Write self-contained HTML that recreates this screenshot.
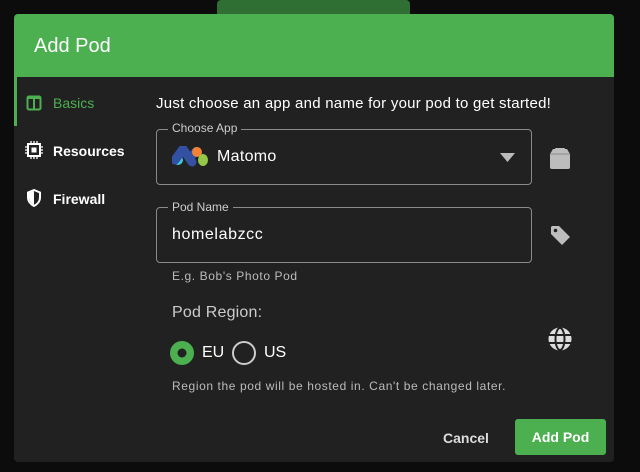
<!DOCTYPE html>
<html><head><style>
*{margin:0;padding:0;box-sizing:border-box}
body{width:640px;height:472px;background:#0c0c0c;font-family:"Liberation Sans",sans-serif;position:relative;overflow:hidden;color:#fff}
.abs{position:absolute}
.tab{left:217px;top:0;width:193px;height:20px;background:#2f6f33;border-radius:4px}
.dlg{left:14px;top:14px;width:600px;height:448px;background:#212121;border-radius:4px;overflow:hidden}
.hdr{left:0;top:0;width:600px;height:63px;background:#4caf50;font-size:20px;padding:21px 0 0 20px}
.nav{font-size:14px;font-weight:bold}
.lbl{font-size:12px;color:#ccc;background:#212121;padding:0 4px}
.box{border:1px solid #8a8a8a;border-radius:4px}
</style></head><body>
<div class="abs tab"></div>
<div class="abs dlg">
 <div class="abs hdr">Add Pod</div>
 <div class="abs" style="left:0;top:63px;width:3px;height:49px;background:#4caf50"></div>
 <svg class="abs" style="left:12px;top:81px" width="16" height="16"><rect x="1.5" y="1.5" width="13" height="13" rx="1.5" fill="none" stroke="#4caf50" stroke-width="2"/><rect x="7" y="1.5" width="2" height="13" fill="#4caf50"/><rect x="2" y="2" width="12" height="2" fill="#4caf50"/></svg>
 <div class="abs nav" style="left:39px;top:81px;color:#4caf50;font-weight:normal">Basics</div>
 <svg class="abs" style="left:11px;top:127px" width="18" height="18"><rect x="3" y="3" width="12" height="12" fill="none" stroke="#fff" stroke-width="2"/><rect x="6.5" y="6.5" width="5" height="5" fill="#fff"/><g stroke="#fff" stroke-width="1.3"><path d="M6 0v3M9 0v3M12 0v3M6 15v3M9 15v3M12 15v3M0 6h3M0 9h3M0 12h3M15 6h3M15 9h3M15 12h3"/></g></svg>
 <div class="abs nav" style="left:39px;top:129px">Resources</div>
 <svg class="abs" style="left:12px;top:175px" width="16" height="18"><path d="M8 1L2 3.5v5c0 4 3 7 6 8.5 3-1.5 6-4.5 6-8.5v-5z" fill="none" stroke="#fff" stroke-width="2"/><path d="M8 2v14c-2.5-1.5-5-4-5-7.5V4z" fill="#fff"/></svg>
 <div class="abs nav" style="left:39px;top:177px">Firewall</div>
 <div class="abs" style="left:142px;top:81px;font-size:15px;letter-spacing:0.25px">Just choose an app and name for your pod to get started!</div>
 <div class="abs box" style="left:142px;top:115px;width:376px;height:56px"></div>
 <div class="abs lbl" style="left:154px;top:107px">Choose App</div>
 <svg class="abs" style="left:158px;top:132px" width="38" height="22"><circle cx="6" cy="14" r="5" fill="#3fc6d9"/><path d="M3 14L11 3L20 16" stroke="#3450a3" stroke-width="9" fill="none" stroke-linejoin="round" stroke-linecap="round"/><path d="M18 12L24 5" stroke="#3450a3" stroke-width="8" stroke-linecap="round"/><circle cx="25" cy="6" r="5" fill="#f38334"/><ellipse cx="31" cy="14" rx="5" ry="6" fill="#95c748"/></svg>
 <div class="abs" style="left:203px;top:134px;font-size:16px;letter-spacing:0.3px">Matomo</div>
 <svg class="abs" style="left:486px;top:139px" width="16" height="10"><path d="M0 0h15L7.5 9z" fill="#bbb"/></svg>
 <svg class="abs" style="left:535px;top:132px" width="22" height="24"><path d="M4 3h14l3 5v13a2 2 0 0 1-2 2H3a2 2 0 0 1-2-2V8z" fill="#bdbdbd"/><rect x="6" y="2" width="10" height="3" rx="1" fill="#bdbdbd"/><path d="M1 8h20" stroke="#8a8a8a"/></svg>
 <div class="abs box" style="left:142px;top:193px;width:376px;height:56px"></div>
 <div class="abs lbl" style="left:154px;top:186px">Pod Name</div>
 <div class="abs" style="left:158px;top:212px;font-size:16px;letter-spacing:0.6px">homelabzcc</div>
 <svg class="abs" style="left:535px;top:210px" width="24" height="24"><path d="M2 3v7l11 11 8-8L10 2H3z" fill="#bdbdbd"/><circle cx="6.5" cy="6.5" r="1.8" fill="#212121"/></svg>
 <div class="abs" style="left:158px;top:255px;font-size:12px;color:#bbb;letter-spacing:0.6px">E.g. Bob's Photo Pod</div>
 <div class="abs" style="left:158px;top:290px;font-size:16px;color:#ccc;letter-spacing:0.2px">Pod Region:</div>
 <svg class="abs" style="left:533px;top:312px" width="26" height="26"><circle cx="13" cy="13" r="11.5" fill="#ddd"/><g stroke="#212121" stroke-width="2" fill="none"><ellipse cx="13" cy="13" rx="4.5" ry="11"/><path d="M1.5 9h23M1.5 17h23"/></g></svg>
 <svg class="abs" style="left:155px;top:326px" width="26" height="26"><circle cx="13" cy="13" r="12" fill="#4caf50"/><circle cx="13" cy="13" r="4.5" fill="#212121"/></svg>
 <div class="abs" style="left:188px;top:330px;font-size:16px">EU</div>
 <svg class="abs" style="left:217px;top:326px" width="26" height="26"><circle cx="13" cy="13" r="11" fill="none" stroke="#ccc" stroke-width="2"/></svg>
 <div class="abs" style="left:250px;top:330px;font-size:16px">US</div>
 <div class="abs" style="left:158px;top:365px;font-size:12px;color:#bbb;letter-spacing:0.6px">Region the pod will be hosted in. Can't be changed later.</div>
 <div class="abs" style="left:429px;top:416px;font-size:14px;font-weight:bold;color:#ddd">Cancel</div>
 <div class="abs" style="left:501px;top:405px;width:91px;height:36px;background:#4caf50;border-radius:3px;font-size:14px;font-weight:bold;text-align:center;line-height:36px">Add Pod</div>
</div>
</body></html>
